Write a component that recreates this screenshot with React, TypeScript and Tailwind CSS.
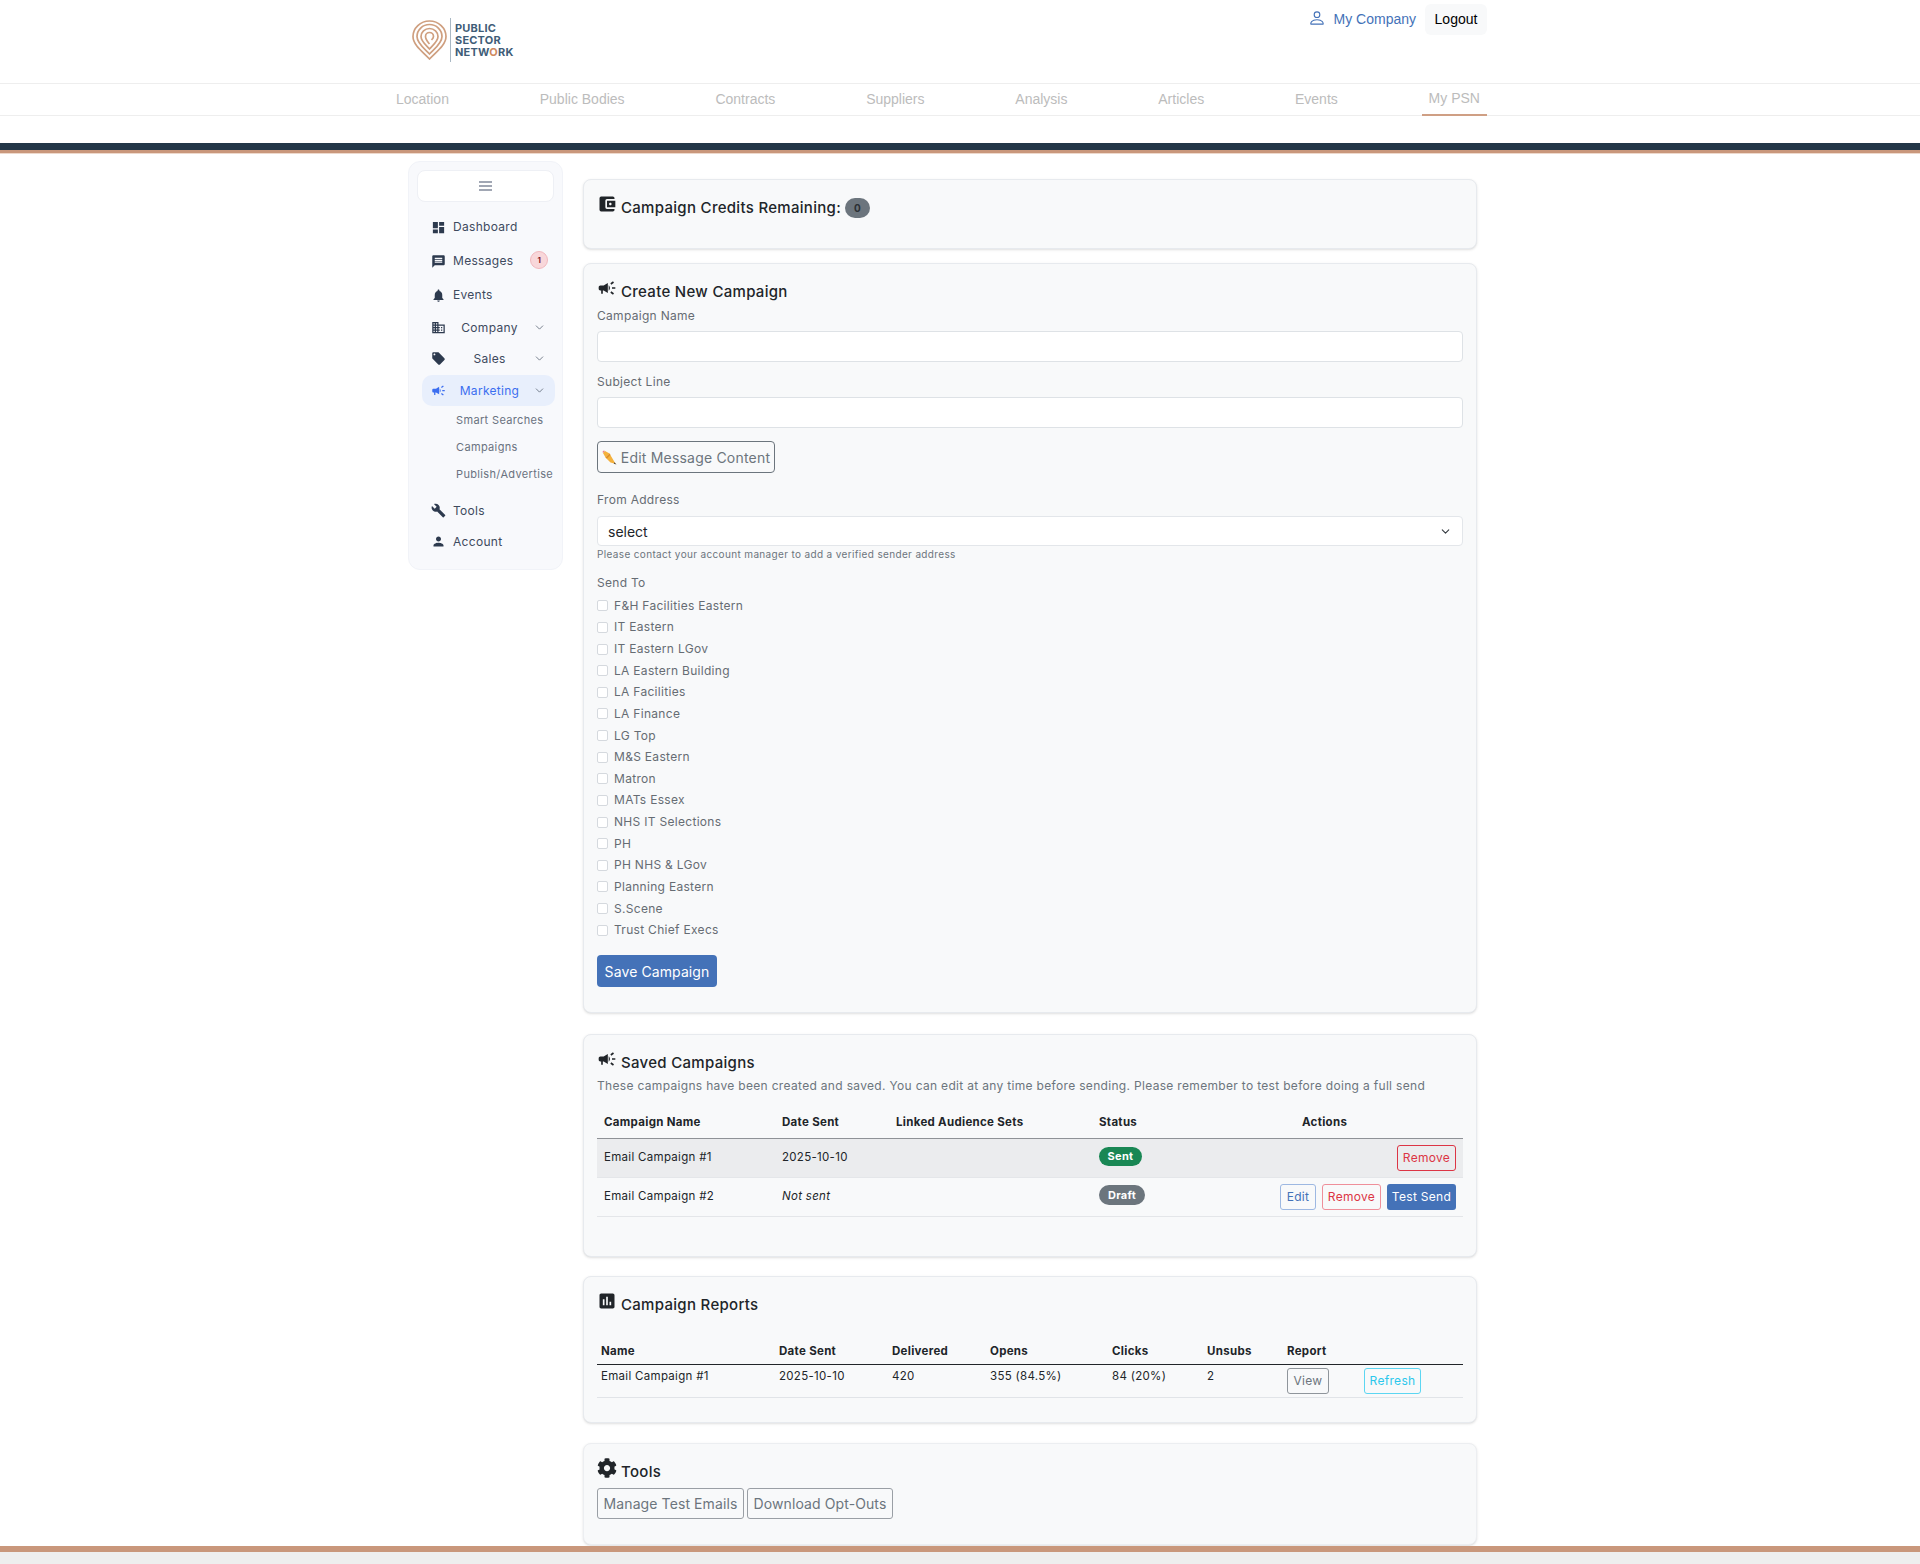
import { ChevronDown } from "lucide-react";
import type { ReactNode } from "react";
import { BsPerson } from "react-icons/bs";
import { FaCog } from "react-icons/fa";
import {
  MdAccountBalanceWallet,
  MdAssessment,
  MdBuild,
  MdCampaign,
  MdDashboard,
  MdDomain,
  MdLocalOffer,
  MdMessage,
  MdNotifications,
  MdPerson,
} from "react-icons/md";

const navItems = ["Location", "Public Bodies", "Contracts", "Suppliers", "Analysis", "Articles", "Events", "My PSN"];

const audiences = [
  "F&H Facilities Eastern",
  "IT Eastern",
  "IT Eastern LGov",
  "LA Eastern Building",
  "LA Facilities",
  "LA Finance",
  "LG Top",
  "M&S Eastern",
  "Matron",
  "MATs Essex",
  "NHS IT Selections",
  "PH",
  "PH NHS & LGov",
  "Planning Eastern",
  "S.Scene",
  "Trust Chief Execs",
];

function Logo() {
  return (
    <div className="flex h-[44px] items-center">
      <svg width="35" height="40" viewBox="0 0 35 40" fill="none" stroke="#cf9f7f" strokeWidth="1.7">
        <path d="M17.5 39C11 32 1 25 1 16.5a16.5 15.5 0 0 1 33 0C34 25 24 32 17.5 39Z" />
        <path d="M17.5 34C13 29 5 23.5 5 16.5a12.5 12 0 0 1 25 0C30 23.5 22 29 17.5 34Z" />
        <path d="M17.5 29C15 26 9 21.500 9 16.500a8.500 8 0 0 1 17 0C26 21.500 20 26 17.500 29Z" />
        <path d="M17.500 24C16 22 13.500 19.500 13.500 16.500a4 4 0 0 1 8 0c0 1.500-1 2.500-2 3.500" />
      </svg>
      <div className="ml-[3px] h-[44px] w-px bg-[#a9b8c4]" />
      <div className="ml-[4px] font-['Inter',sans-serif] text-[11px] leading-[12px] font-bold tracking-[0.2px] text-[#3f5d78]">
        <div>PUBLIC</div>
        <div>SECTOR</div>
        <div>
          NETW<span className="text-[#d08a5f]">O</span>RK
        </div>
      </div>
    </div>
  );
}

function Header() {
  return (
    <>
      <div className="flex h-[83px] w-[1487px] justify-between pl-[412px]">
        <div className="pt-[18px]">
          <Logo />
        </div>
        <div className="flex items-start pt-[4px]">
          <a className="mt-[5px] flex items-center gap-[8px] font-['Liberation_Sans',sans-serif] text-[14px] text-[#4472b8]">
            <BsPerson className="mb-[3px] text-[18px]" />
            My Company
          </a>
          <button className="ml-[9px] h-[31px] w-[62px] rounded-md bg-[#f8f9fa] font-['Liberation_Sans',sans-serif] text-[14px] text-black">
            Logout
          </button>
        </div>
      </div>
      <div className="h-[33px] border-y border-[#eeeeee]">
        <div className="ml-[389px] flex h-full w-[1098px] justify-between">
          {navItems.map((item) => (
            <a
              key={item}
              className={`flex h-[32px] items-center px-[7px] pb-[1px] font-['Liberation_Sans',sans-serif] text-[14px] text-[#bcbcbc] ${
                item === "My PSN" ? "border-b-[2px] border-[#cf9f84]" : ""
              }`}
            >
              {item}
            </a>
          ))}
        </div>
      </div>
      <div className="mt-[27px] h-[7px] bg-[#233647]" />
      <div className="h-[3px] bg-[#c9977b]" />
      <div className="h-px bg-[#eed9cc]" />
    </>
  );
}

function SideLink({ icon, label, badge }: { icon: ReactNode; label: string; badge?: boolean }) {
  return (
    <a className="ml-[22px] flex h-[34px] items-center text-[12px] tracking-[0.3px] text-[#3e4a5e]">
      <span className="flex w-[22px] text-[15px] text-[#2d3a4e]">{icon}</span>
      {label}
      {badge && (
        <span className="mb-[2px] ml-[17px] flex size-[18px] items-center justify-center rounded-full border border-[#f1b8bd] bg-[#f8d7da] text-[8px] font-bold text-[#842029]">
          1
        </span>
      )}
    </a>
  );
}

function SideGroup({ icon, label, active }: { icon: ReactNode; label: string; active?: boolean }) {
  return (
    <a
      className={`ml-[13px] mr-[7px] flex h-[31px] items-center rounded-[10px] pl-[9px] pr-[9px] text-[12px] tracking-[0.3px] ${
        active ? "bg-[#e8effc] text-[#3b6ef0]" : "text-[#3e4a5e]"
      }`}
    >
      <span className={`flex w-[15px] text-[15px] ${active ? "text-[#3b6ef0]" : "text-[#2d3a4e]"}`}>{icon}</span>
      <span className="flex-1 text-center">{label}</span>
      <ChevronDown size={13} strokeWidth={1.5} className="text-[#5d6675]" />
    </a>
  );
}

function Sidebar() {
  return (
    <aside className="mt-[7px] h-[409px] w-[155px] shrink-0 rounded-[12px] border border-[#f1f3f8] bg-[#f8f9fc] font-['Inter',sans-serif]">
      <button className="ml-[8px] mt-[8px] flex h-[32px] w-[137px] items-center justify-center rounded-[8px] border border-[#eef0f5] bg-white">
        <svg width="13" height="10" viewBox="0 0 13 10" fill="none" stroke="#44506a" strokeWidth="1.2">
          <path d="M0 1h13M0 5h13M0 9h13" />
        </svg>
      </button>
      <div className="mt-[8px]">
        <SideLink icon={<MdDashboard />} label="Dashboard" />
        <SideLink icon={<MdMessage />} label="Messages" badge />
        <SideLink icon={<MdNotifications />} label="Events" />
        <SideGroup icon={<MdDomain />} label="Company" />
        <SideGroup icon={<MdLocalOffer />} label="Sales" />
        <div className="mt-px">
          <SideGroup icon={<MdCampaign />} label="Marketing" active />
        </div>
        <div className="mt-px flex flex-col pl-[47px] text-[11px] tracking-[0.35px] text-[#6a7280]">
          <a className="flex h-[27px] items-center">Smart Searches</a>
          <a className="flex h-[27px] items-center">Campaigns</a>
          <a className="flex h-[27px] items-center">Publish/Advertise</a>
        </div>
        <div className="mt-[7px]">
          <a className="ml-[22px] flex h-[31px] items-center text-[12px] tracking-[0.3px] text-[#3e4a5e]">
            <span className="flex w-[22px] text-[15px] text-[#2d3a4e]">
              <MdBuild />
            </span>
            Tools
          </a>
          <a className="ml-[22px] flex h-[31px] items-center text-[12px] tracking-[0.3px] text-[#3e4a5e]">
            <span className="flex w-[22px] text-[15px] text-[#2d3a4e]">
              <MdPerson />
            </span>
            Account
          </a>
        </div>
      </div>
    </aside>
  );
}

function CardTitle({ icon, children }: { icon: ReactNode; children: ReactNode }) {
  return (
    <div className="flex h-[30px] items-start pt-[3px] text-[15px] leading-[24px] font-medium tracking-[0.3px] text-[#212529]">
      <span className="-mt-[2px] flex w-[24px] text-[20px] text-[#212529]">{icon}</span>
      {children}
    </div>
  );
}

function Label({ children }: { children: ReactNode }) {
  return <div className="h-[18px] text-[12px] leading-[18px] tracking-[0.3px] text-[#666c73]">{children}</div>;
}

function PencilIcon() {
  return (
    <svg width="15" height="15" viewBox="0 0 15 15" className="mr-[4px] inline-block">
      <path d="M3.500 7.500 8.500 12.500 14 14 12.500 12 7.500 3.500Z" fill="#f4b13d" transform="translate(0 0)" />
      <path d="M3.500 7.500 1 3 3 1 7.500 3.500Z" fill="#f4b13d" />
      <path d="M1 3 3 1 1.800 0.500 0.500 1.800Z" fill="#e8808a" />
      <path d="M3.500 7.500 7.500 3.500 8.500 5 5 8.500Z" fill="#dd8f2a" />
      <path d="M12.300 12.300 14.500 14.500 11.800 13.700Z" fill="#444" />
    </svg>
  );
}

function CreditsCard() {
  return (
    <section className="h-[70px] rounded-lg border border-[#e7eaee] bg-[#f8f9fa] px-[13px] pt-[13px] shadow-sm">
      <CardTitle icon={<MdAccountBalanceWallet />}>
        Campaign Credits Remaining:
        <span className="ml-[4px] mt-[2px] flex h-[20px] w-[25px] items-center justify-center rounded-full bg-[#6c757d] text-[10px] font-bold text-[#2b3035]">
          0
        </span>
      </CardTitle>
    </section>
  );
}

function CreateCard() {
  return (
    <section className="mt-[14px] h-[750px] rounded-lg border border-[#e7eaee] bg-[#f8f9fa] px-[13px] pt-[13px] shadow-sm">
      <CardTitle icon={<MdCampaign />}>Create New Campaign</CardTitle>
      <Label>Campaign Name</Label>
      <input className="mt-[6px] block h-[31px] w-full rounded-[4px] border border-[#dee2e6] bg-white" />
      <div className="mt-[11px]">
        <Label>Subject Line</Label>
      </div>
      <input className="mt-[6px] block h-[31px] w-full rounded-[4px] border border-[#dee2e6] bg-white" />
      <button className="mt-[13px] flex h-[32px] w-[178px] items-center justify-center rounded-[4px] border border-[#6c757d] text-[14px] tracking-[0.2px] text-[#6c757d]">
        <PencilIcon />
        Edit Message Content
      </button>
      <div className="mt-[18px]">
        <Label>From Address</Label>
      </div>
      <div className="relative mt-[7px]">
        <select className="block h-[30px] w-full appearance-none rounded-[4px] border border-[#e3e6ea] bg-white px-[10px] text-[14px] text-[#212529]">
          <option>select</option>
        </select>
        <ChevronDown size={13} strokeWidth={2} className="pointer-events-none absolute right-[11px] top-[9px] text-[#343a40]" />
      </div>
      <div className="mt-px h-[14px] text-[10px] leading-[14px] tracking-[0.35px] text-[#6c757d]">
        Please contact your account manager to add a verified sender address
      </div>
      <div className="mt-[13px]">
        <Label>Send To</Label>
      </div>
      <div className="mt-[3px] flex flex-col">
        {audiences.map((name) => (
          <label key={name} className="flex h-[21.63px] items-center text-[12px] tracking-[0.3px] text-[#666c73]">
            <input type="checkbox" className="mr-[6px] size-[11px] appearance-none rounded-[2px] border border-[#d5d9de] bg-white" />
            {name}
          </label>
        ))}
      </div>
      <button className="mt-[14px] h-[32px] w-[120px] rounded-[4px] bg-[#4472b8] text-[14px] tracking-[0.1px] text-white">
        Save Campaign
      </button>
    </section>
  );
}

function SavedCard() {
  return (
    <section className="mt-[21px] h-[223px] rounded-lg border border-[#e7eaee] bg-[#f8f9fa] px-[13px] pt-[13px] shadow-sm">
      <CardTitle icon={<MdCampaign />}>Saved Campaigns</CardTitle>
      <p className="h-[16px] text-[12px] leading-[16px] tracking-[0.32px] text-[#6c757d]">
        These campaigns have been created and saved. You can edit at any time before sending. Please remember to test
        before doing a full send
      </p>
      <table className="mt-[13px] w-[866px] table-fixed border-collapse text-left text-[11.5px] tracking-[0.3px] text-[#212529]">
        <colgroup>
          <col className="w-[178px]" />
          <col className="w-[114px]" />
          <col className="w-[203px]" />
          <col className="w-[203px]" />
          <col className="w-[168px]" />
        </colgroup>
        <thead>
          <tr className="h-[31px] border-b border-[#8f9297]">
            <th className="pl-[7px] font-bold">Campaign Name</th>
            <th className="pl-[7px] font-bold">Date Sent</th>
            <th className="pl-[7px] font-bold">Linked Audience Sets</th>
            <th className="pl-[7px] font-bold">Status</th>
            <th className="pl-[7px] font-bold">Actions</th>
          </tr>
        </thead>
        <tbody>
          <tr className="h-[39px] border-b border-[#e4e6e9] bg-[#ebecee]">
            <td className="pl-[7px]">Email Campaign #1</td>
            <td className="pl-[7px]">2025-10-10</td>
            <td />
            <td className="pl-[7px]">
              <span className="mb-[3px] inline-flex h-[19px] w-[43px] items-center justify-center rounded-full bg-[#198754] text-[11px] font-bold text-white">
                Sent
              </span>
            </td>
            <td className="pr-[7px]">
              <div className="flex justify-end">
                <button className="h-[26px] w-[59px] rounded-[3px] border border-[#dc3545] text-[12px] text-[#dc3545]">Remove</button>
              </div>
            </td>
          </tr>
          <tr className="h-[39px] border-b border-[#e4e6e9]">
            <td className="pl-[7px]">Email Campaign #2</td>
            <td className="pl-[7px] italic">Not sent</td>
            <td />
            <td className="pl-[7px]">
              <span className="mb-[3px] inline-flex h-[20px] w-[46px] items-center justify-center rounded-full bg-[#6c757d] text-[11px] font-bold text-white">
                Draft
              </span>
            </td>
            <td className="pr-[7px]">
              <div className="-ml-[50px] flex justify-end gap-[6px]">
                <button className="h-[26px] w-[36px] rounded-[3px] border border-[#9db8e2] text-[12px] text-[#4472b8]">Edit</button>
                <button className="h-[26px] w-[59px] rounded-[3px] border border-[#ef8f9a] text-[12px] text-[#dc3545]">Remove</button>
                <button className="h-[26px] w-[69px] rounded-[3px] bg-[#4472b8] text-[12px] text-white">Test Send</button>
              </div>
            </td>
          </tr>
        </tbody>
      </table>
    </section>
  );
}

function ReportsCard() {
  return (
    <section className="mt-[19px] h-[147px] rounded-lg border border-[#e7eaee] bg-[#f8f9fa] px-[13px] pt-[13px] shadow-sm">
      <CardTitle icon={<MdAssessment />}>Campaign Reports</CardTitle>
      <table className="mt-[20px] w-[866px] table-fixed border-collapse text-left text-[11.5px] tracking-[0.3px] text-[#212529]">
        <colgroup>
          <col className="w-[178px]" />
          <col className="w-[113px]" />
          <col className="w-[98px]" />
          <col className="w-[122px]" />
          <col className="w-[95px]" />
          <col className="w-[80px]" />
          <col className="w-[77px]" />
          <col className="w-[103px]" />
        </colgroup>
        <thead>
          <tr className="h-[24px] border-b border-[#212529]">
            <th className="pl-[4px] font-bold">Name</th>
            <th className="pl-[4px] font-bold">Date Sent</th>
            <th className="pl-[4px] font-bold">Delivered</th>
            <th className="pl-[4px] font-bold">Opens</th>
            <th className="pl-[4px] font-bold">Clicks</th>
            <th className="pl-[4px] font-bold">Unsubs</th>
            <th className="pl-[4px] font-bold">Report</th>
            <th />
          </tr>
        </thead>
        <tbody>
          <tr className="h-[33px] border-b border-[#e1e4e8] align-top">
            <td className="pl-[4px] pt-[3px]">Email Campaign #1</td>
            <td className="pl-[4px] pt-[3px]">2025-10-10</td>
            <td className="pl-[4px] pt-[3px]">420</td>
            <td className="pl-[4px] pt-[3px]">355 (84.5%)</td>
            <td className="pl-[4px] pt-[3px]">84 (20%)</td>
            <td className="pl-[4px] pt-[3px]">2</td>
            <td className="pl-[4px] pt-[3px]">
              <button className="block h-[26px] w-[42px] rounded-[3px] border border-[#8f959b] text-[12px] text-[#6c757d]">View</button>
            </td>
            <td className="pl-[4px] pt-[3px]">
              <button className="block h-[26px] w-[57px] rounded-[3px] border border-[#5cd6f2] text-[12px] text-[#2cc8ec]">Refresh</button>
            </td>
          </tr>
        </tbody>
      </table>
    </section>
  );
}

function ToolsCard() {
  return (
    <section className="mt-[20px] h-[102px] rounded-lg border border-[#eceef1] bg-[#f8f9fa] px-[13px] pt-[13px] shadow-sm">
      <CardTitle icon={<FaCog />}>Tools</CardTitle>
      <div className="mt-px flex gap-[3px]">
        <button className="h-[31px] w-[147px] rounded-[3px] border border-[#9a9fa5] text-[14px] tracking-[0.1px] text-[#6c757d]">
          Manage Test Emails
        </button>
        <button className="h-[31px] w-[146px] rounded-[3px] border border-[#9a9fa5] text-[14px] tracking-[0.1px] text-[#6c757d]">
          Download Opt-Outs
        </button>
      </div>
    </section>
  );
}

export default function App() {
  return (
    <div className="flex h-[1564px] flex-col overflow-hidden bg-white">
      <Header />
      <div className="flex min-h-0 flex-1 gap-[20px] pl-[408px] font-['Inter',sans-serif]">
        <Sidebar />
        <main className="mt-[25px] w-[894px]">
          <CreditsCard />
          <CreateCard />
          <SavedCard />
          <ReportsCard />
          <ToolsCard />
        </main>
      </div>
      <div className="h-[6px] bg-[#c9977b]" />
      <div className="h-[12px] bg-[#eeeeee]" />
    </div>
  );
}
